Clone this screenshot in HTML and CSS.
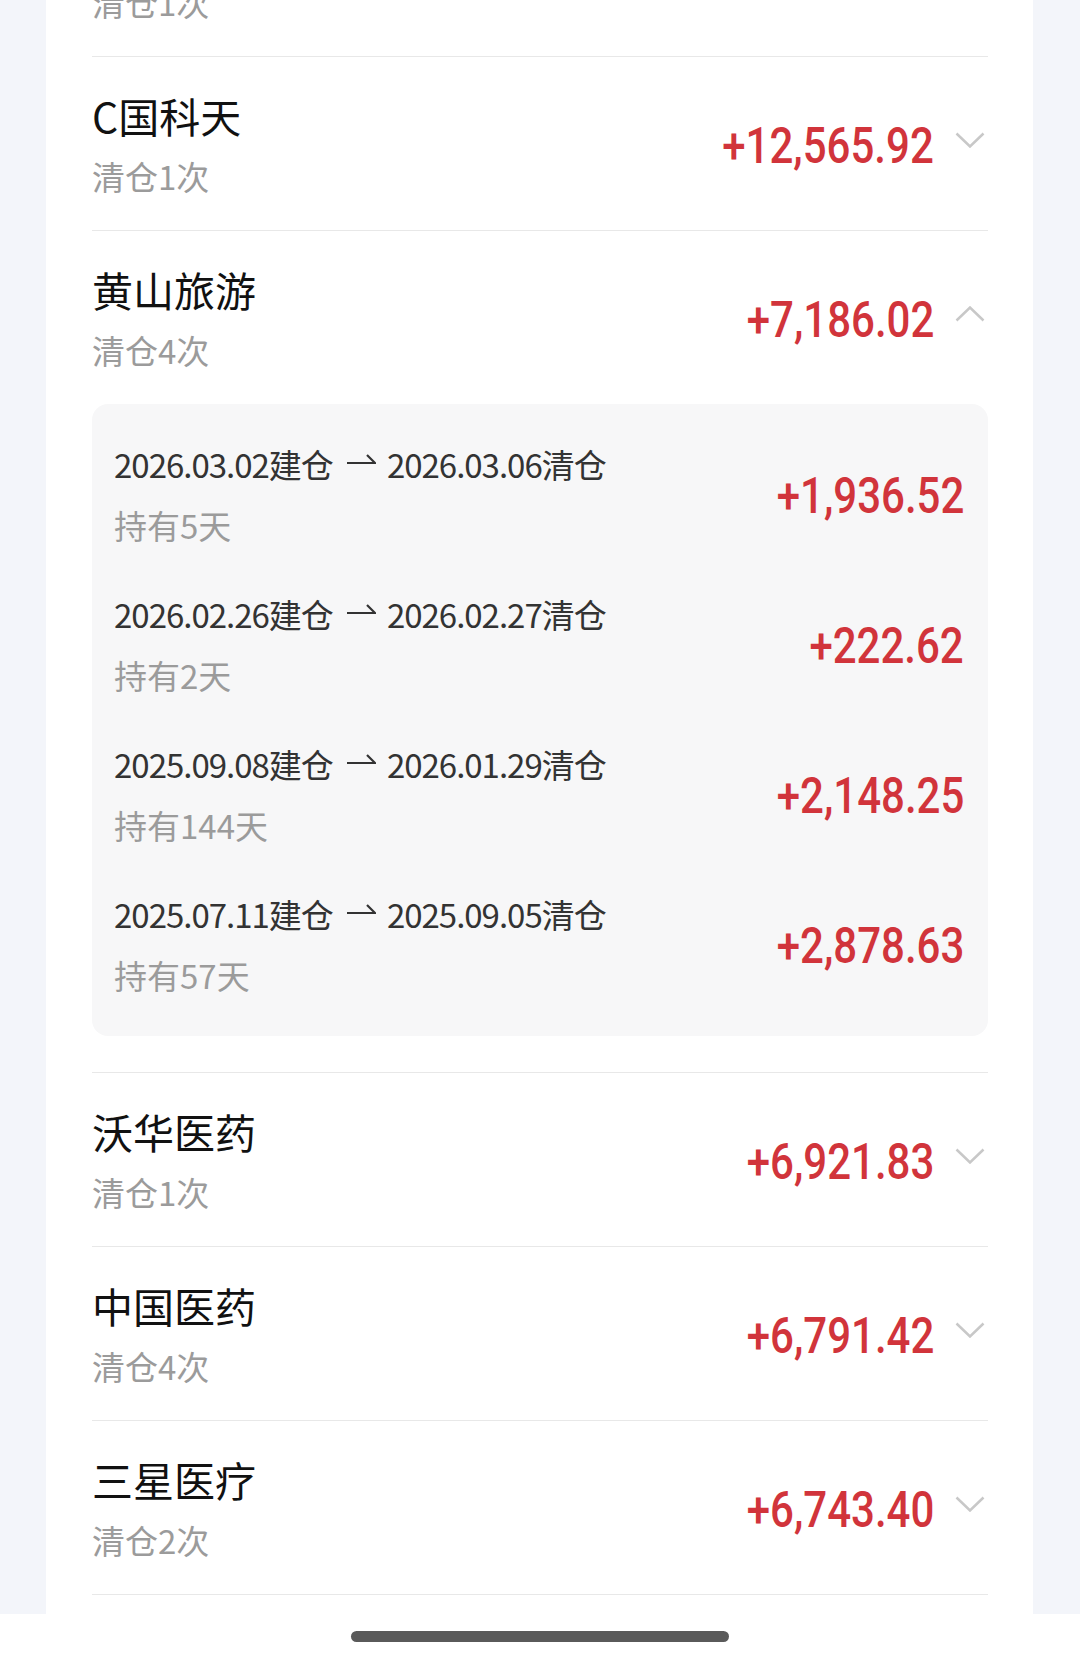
FILE: index.html
```
<!DOCTYPE html>
<html lang="zh-CN">
<head>
    <meta charset="UTF-8">
    <meta name="viewport" content="width=device-width, initial-scale=1.0">
    <title>清仓记录</title>
    <link rel="stylesheet" href="styles.css">
</head>
<body>
    <div class="screen">
        <div class="scroll">
            <div class="card">
                <!-- previous row, scrolled mostly out of view -->
                <div class="row row-cut">
                    <div class="count">清仓1次</div>
                </div>

                <div class="row">
                    <div class="row-head">
                        <div class="row-info">
                            <div class="name">C国科天</div>
                            <div class="count">清仓1次</div>
                        </div>
                        <div class="amount"><span>+12,565.92</span></div>
                        <svg class="chevron" viewBox="0 0 30 16"><path d="M1.5 1.5L15 14.5L28.5 1.5"/></svg>
                    </div>
                </div>

                <div class="row open">
                    <div class="row-head">
                        <div class="row-info">
                            <div class="name">黄山旅游</div>
                            <div class="count">清仓4次</div>
                        </div>
                        <div class="amount"><span>+7,186.02</span></div>
                        <svg class="chevron" viewBox="0 0 30 16"><path d="M1.5 14.5L15 1.5L28.5 14.5"/></svg>
                    </div>

                    <div class="detail">
                        <div class="trade">
                            <div class="trade-info">
                                <div class="trade-date">2026.03.02建仓<svg class="arrow" viewBox="0 0 30 12"><path d="M1 10H29L21 2"/></svg>2026.03.06清仓</div>
                                <div class="trade-hold">持有5天</div>
                            </div>
                            <div class="amount"><span>+1,936.52</span></div>
                        </div>
                        <div class="trade">
                            <div class="trade-info">
                                <div class="trade-date">2026.02.26建仓<svg class="arrow" viewBox="0 0 30 12"><path d="M1 10H29L21 2"/></svg>2026.02.27清仓</div>
                                <div class="trade-hold">持有2天</div>
                            </div>
                            <div class="amount"><span>+222.62</span></div>
                        </div>
                        <div class="trade">
                            <div class="trade-info">
                                <div class="trade-date">2025.09.08建仓<svg class="arrow" viewBox="0 0 30 12"><path d="M1 10H29L21 2"/></svg>2026.01.29清仓</div>
                                <div class="trade-hold">持有144天</div>
                            </div>
                            <div class="amount"><span>+2,148.25</span></div>
                        </div>
                        <div class="trade">
                            <div class="trade-info">
                                <div class="trade-date">2025.07.11建仓<svg class="arrow" viewBox="0 0 30 12"><path d="M1 10H29L21 2"/></svg>2025.09.05清仓</div>
                                <div class="trade-hold">持有57天</div>
                            </div>
                            <div class="amount"><span>+2,878.63</span></div>
                        </div>
                    </div>
                </div>

                <div class="row">
                    <div class="row-head">
                        <div class="row-info">
                            <div class="name">沃华医药</div>
                            <div class="count">清仓1次</div>
                        </div>
                        <div class="amount"><span>+6,921.83</span></div>
                        <svg class="chevron" viewBox="0 0 30 16"><path d="M1.5 1.5L15 14.5L28.5 1.5"/></svg>
                    </div>
                </div>

                <div class="row">
                    <div class="row-head">
                        <div class="row-info">
                            <div class="name">中国医药</div>
                            <div class="count">清仓4次</div>
                        </div>
                        <div class="amount"><span>+6,791.42</span></div>
                        <svg class="chevron" viewBox="0 0 30 16"><path d="M1.5 1.5L15 14.5L28.5 1.5"/></svg>
                    </div>
                </div>

                <div class="row">
                    <div class="row-head">
                        <div class="row-info">
                            <div class="name">三星医疗</div>
                            <div class="count">清仓2次</div>
                        </div>
                        <div class="amount"><span>+6,743.40</span></div>
                        <svg class="chevron" viewBox="0 0 30 16"><path d="M1.5 1.5L15 14.5L28.5 1.5"/></svg>
                    </div>
                </div>
            </div>
        </div>

        <div class="home-bar">
            <div class="indicator"></div>
        </div>
    </div>
</body>
</html>
```

FILE: styles.css
```
* {
    margin: 0;
    padding: 0;
    box-sizing: border-box;
}

body {
    font-family: "Noto Sans CJK SC", "Noto Sans", sans-serif;
    background-color: #f3f5fa;
}

.screen {
    display: flex;
    flex-direction: column;
    height: 1659px;
    overflow: hidden;
}

.scroll {
    flex: 1;
    display: flex;
    flex-direction: column;
    overflow: hidden;
    padding: 0 47px 0 46px;
}

.card {
    flex: 1;
    background-color: #fff;
    padding: 0 45px 0 46px;
}

.row {
    border-bottom: 1px solid #e8e8e8;
}

.row-cut .count {
    margin-top: -23px;
    margin-bottom: 29px;
}

.row-head {
    display: flex;
    align-items: center;
    padding: 30px 0 29px;
}

.row-info {
    flex: 1;
}

.name {
    font-size: 41px;
    line-height: 56px;
    color: #111;
}

.count {
    font-size: 33px;
    line-height: 50px;
    color: #9b9b9b;
    margin-top: 8px;
}

/* digits in the app are a condensed face, squeeze Roboto to match */
.amount {
    font-family: "Roboto", sans-serif;
    font-weight: 500;
    font-size: 50px;
    line-height: 60px;
    color: #d1343b;
    white-space: nowrap;
    margin-top: 3px;
}

.amount span {
    display: inline-block;
    transform: scaleX(0.84);
    transform-origin: right center;
}

.chevron {
    width: 30px;
    height: 16px;
    margin: 0 3px 9px 21px;
    fill: none;
    stroke: #c8c8c8;
    stroke-width: 2.5;
}

.detail {
    background-color: #f7f7f8;
    border-radius: 16px;
    padding: 15px 24px 17px 22px;
    margin-bottom: 36px;
}

.trade {
    display: flex;
    align-items: center;
    height: 150px;
}

.trade-info {
    flex: 1;
}

.trade-date {
    font-size: 33px;
    line-height: 50px;
    letter-spacing: -1px;
    color: #333;
    white-space: nowrap;
}

.arrow {
    width: 30px;
    height: 12px;
    margin: 0 11px 0 13px;
    vertical-align: 13px;
    fill: none;
    stroke: #333;
    stroke-width: 2.2;
}

.trade-hold {
    font-size: 33px;
    line-height: 50px;
    color: #9b9b9b;
    margin-top: 11px;
}

.home-bar {
    height: 45px;
    background-color: #fff;
    display: flex;
    justify-content: center;
    align-items: center;
}

.indicator {
    width: 378px;
    height: 11px;
    border-radius: 6px;
    background-color: #5a5a5a;
}
```
